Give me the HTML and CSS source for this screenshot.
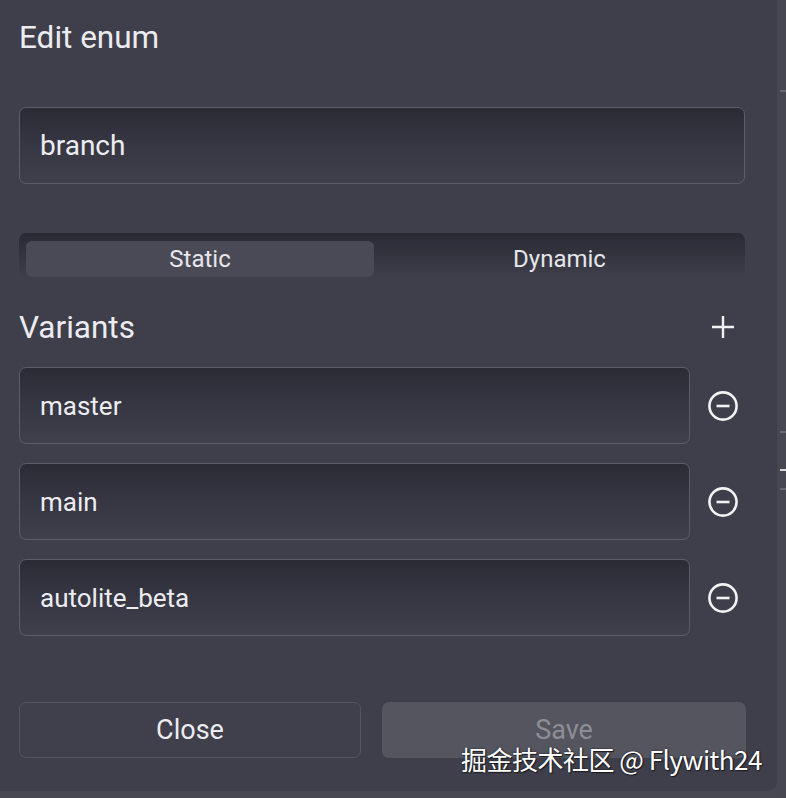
FILE: index.html
```html
<!DOCTYPE html>
<html>
<head>
<meta charset="utf-8">
<link rel="stylesheet" href="styles.css">
</head>
<body>
<div class="page">
  <div class="panel">
    <h1 class="title">Edit enum</h1>
    <div class="field name-field"><span>branch</span></div>
    <div class="segmented">
      <div class="seg seg-active">Static</div>
      <div class="seg">Dynamic</div>
    </div>
    <div class="variants-head">
      <h2 class="subtitle">Variants</h2>
      <svg class="icon-plus" width="34" height="34" viewBox="0 0 34 34"><path d="M17 6v22M6 17h22" stroke="#f2f2f5" stroke-width="2.4" fill="none"/></svg>
    </div>
    <div class="variant-list">
      <div class="variant-row">
        <div class="field variant-field"><span>master</span></div>
        <svg class="icon-minus" width="34" height="34" viewBox="0 0 34 34"><circle cx="17" cy="17" r="13.6" stroke="#f2f2f5" stroke-width="2.6" fill="none"/><path d="M10.5 17h13" stroke="#f2f2f5" stroke-width="2.6"/></svg>
      </div>
      <div class="variant-row">
        <div class="field variant-field"><span>main</span></div>
        <svg class="icon-minus" width="34" height="34" viewBox="0 0 34 34"><circle cx="17" cy="17" r="13.6" stroke="#f2f2f5" stroke-width="2.6" fill="none"/><path d="M10.5 17h13" stroke="#f2f2f5" stroke-width="2.6"/></svg>
      </div>
      <div class="variant-row">
        <div class="field variant-field"><span>autolite_beta</span></div>
        <svg class="icon-minus" width="34" height="34" viewBox="0 0 34 34"><circle cx="17" cy="17" r="13.6" stroke="#f2f2f5" stroke-width="2.6" fill="none"/><path d="M10.5 17h13" stroke="#f2f2f5" stroke-width="2.6"/></svg>
      </div>
    </div>
    <div class="actions">
      <div class="btn btn-close">Close</div>
      <div class="btn btn-save">Save</div>
    </div>
    <div class="watermark">掘金技术社区 @ Flywith24</div>
  </div>
  <div class="edge">
    <div class="tick tick1"></div>
    <div class="tick tick2"></div>
    <div class="tick tick3"></div>
    <div class="tick tick4"></div>
  </div>
</div>
</body>
</html>
```
FILE: styles.css
```css
* { box-sizing: border-box; }
html, body { margin: 0; padding: 0; }
body {
  background: #474852;
  font-family: Roboto, "Noto Sans", sans-serif;
  color: #ececf0;
  width: 786px;
  height: 798px;
  overflow: hidden;
}
.page { display: flex; height: 798px; }
.panel {
  position: relative;
  width: 777px;
  height: 791px;
  background: #3e3f4a;
  border-bottom-right-radius: 10px;
  padding: 0 32px 0 19px;
  display: flex;
  flex-direction: column;
}
.edge { position: relative; flex: 1; background: #464751; }
.tick { position: absolute; left: 3px; right: 0; height: 2px; background: #676872; }
.tick1 { top: 90px; }
.tick2 { top: 431px; }
.tick3 { top: 469px; background: #d9d9de; }
.tick4 { top: 488px; }
.title {
  margin: 19px 0 0;
  font-size: 31.5px;
  font-weight: 400;
  line-height: 38px;
  color: #ececf0;
}
.field {
  border: 1.5px solid #5c5d68;
  border-radius: 7px;
  background: linear-gradient(180deg, #2b2b36 0%, #353641 45%, #3f404c 100%);
  display: flex;
  align-items: center;
  padding-left: 20px;
  color: #ededf1;
}
.name-field {
  margin-top: 50px;
  height: 77px;
  font-size: 28px;
}
.segmented {
  margin-top: 49px;
  height: 45px;
  border-radius: 7px 7px 0 0;
  background: linear-gradient(180deg, #2a2a35 0%, #353641 60%, #3e3f4a 100%);
  display: flex;
  padding: 8px 0 0 7px;
  gap: 0;
}
.seg {
  flex: 1;
  height: 36px;
  display: flex;
  align-items: center;
  justify-content: center;
  font-size: 24px;
  color: #e6e6eb;
  border-radius: 6px;
}
.seg-active {
  flex: 0 0 348px;
  background: #4a4a56;
}
.variants-head {
  margin-top: 28px;
  display: flex;
  align-items: center;
  justify-content: space-between;
  height: 42px;
}
.subtitle {
  margin: 0;
  font-size: 31.5px;
  font-weight: 400;
  color: #ececf0;
}
.icon-plus { margin-right: 5px; }
.variant-list {
  margin-top: 19px;
  display: flex;
  flex-direction: column;
  gap: 19px;
}
.variant-row {
  display: flex;
  align-items: center;
  gap: 16px;
}
.variant-field {
  width: 671px;
  height: 77px;
  font-size: 26px;
}
.actions {
  margin-top: 66px;
  display: grid;
  grid-template-columns: 342px 364px;
  gap: 21px;
}
.btn {
  height: 56px;
  border-radius: 7px;
  display: flex;
  align-items: center;
  justify-content: center;
  font-size: 27px;
}
.btn-close {
  border: 1.5px solid #54555f;
  color: #ececf0;
  background: #3f404b;
}
.btn-save {
  background: #54555f;
  color: #8d8e96;
}
.watermark {
  position: absolute;
  left: 461px;
  top: 740px;
  font-family: "Noto Sans CJK SC", "Noto Sans", sans-serif;
  font-size: 26px;
  color: #ffffff;
  text-shadow: 1px 1px 1px #1a1a20, 0 0 2px #1a1a20;
  white-space: nowrap;
  letter-spacing: -0.5px;
}
```
